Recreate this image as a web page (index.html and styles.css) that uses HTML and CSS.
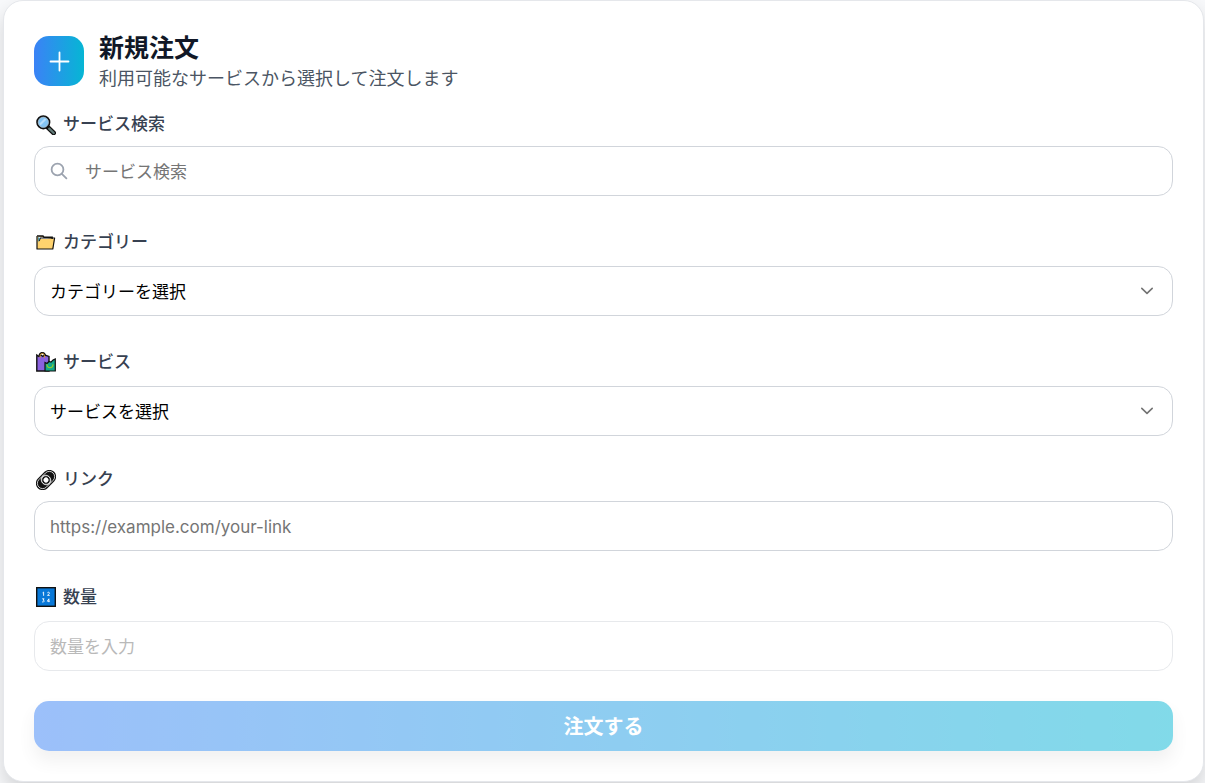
FILE: index.html
```
<!DOCTYPE html>
<html lang="ja">
<head>
  <meta charset="UTF-8">
  <meta name="viewport" content="width=device-width, initial-scale=1.0">
  <title>新規注文</title>
  <link rel="stylesheet" href="styles.css">
</head>
<body>
  <main class="order-card">
    <header class="order-header">
      <div class="header-icon">
        <svg width="26" height="26" viewBox="0 0 26 26" fill="none" stroke="#fff" stroke-width="1.8" stroke-linecap="round" aria-hidden="true">
          <path d="M13.5 4.5v18M4.5 13.5h18"/>
        </svg>
      </div>
      <div>
        <h1>新規注文</h1>
        <p>利用可能なサービスから選択して注文します</p>
      </div>
    </header>

    <form class="order-form">
      <!-- Search -->
      <div class="field">
        <label class="compact" for="search">
          <svg class="label-icon" viewBox="0 0 20 20" aria-hidden="true">
            <path d="M11.5 12l6.2 6" stroke="#111" stroke-width="4.6" stroke-linecap="round"/>
            <path d="M13.2 13.7l4.5 4.3" stroke="#617b78" stroke-width="2.3" stroke-linecap="round"/>
            <circle cx="7.3" cy="7.3" r="6.2" fill="#83c5f5" stroke="#111" stroke-width="1.8"/>
            <circle cx="7.3" cy="7.3" r="5.1" fill="none" stroke="#a9bcc8" stroke-width=".8"/>
            <path d="M3.5 8.5l5-5 2 1-6 6z" fill="#b9dffb"/>
          </svg>
          サービス検索
        </label>
        <div class="control">
          <svg class="search-icon" width="20" height="20" viewBox="0 0 20 20" fill="none" stroke="#9ca3af" stroke-width="1.8" stroke-linecap="round" aria-hidden="true">
            <circle cx="8.5" cy="8.5" r="5.9"/>
            <path d="M12.8 12.8l4.6 4.6"/>
          </svg>
          <input class="with-icon" type="text" id="search" placeholder="サービス検索">
        </div>
      </div>

      <!-- Category -->
      <div class="field">
        <label for="category">
          <svg class="label-icon" viewBox="0 0 20 20" aria-hidden="true">
            <path d="M1 4h6l1 1.2h8.2V7" fill="#d99a2b" stroke="#111" stroke-width="1.4"/>
            <path d="M1 4l2.7 3H18.6l-1.4 10H1z" fill="#ffd36e"/>
            <path d="M1 4v13h15.8L18.6 6H4.4L3 9" fill="none" stroke="#111" stroke-width="1.2" stroke-linejoin="round"/>
            <path d="M2 5l2 1.2-1.8 4z" fill="#4b8fa0"/>
          </svg>
          カテゴリー
        </label>
        <div class="control">
          <select id="category">
            <option>カテゴリーを選択</option>
          </select>
          <svg class="chevron" width="14" height="8" viewBox="0 0 14 8" fill="none" stroke="#737373" stroke-width="1.6" stroke-linecap="round" stroke-linejoin="round" aria-hidden="true">
            <path d="M1.8 1.3L7 6.3l5.2-5"/>
          </svg>
        </div>
      </div>

      <!-- Service -->
      <div class="field">
        <label for="service">
          <svg class="label-icon" viewBox="0 0 20 20" aria-hidden="true">
            <path d="M3.5 5V3Q4 .8 6.3.8T9 3v2" fill="none" stroke="#111" stroke-width="1.8"/>
            <path d="M.8 3l2 1.4 2-1.4 2 1.4 2-1.4 4.2 1.4V19H.8z" fill="#8b62df" stroke="#111" stroke-width="1.4"/>
            <path d="M4.2 6V3.2Q4.6 1.4 6.3 1.4T8.4 3.2V6" fill="none" stroke="#d99b2c" stroke-width=".9"/>
            <path d="M9 10.5l2 1 2-2 2 .6 2-2 2.3-1.1V19H9z" fill="#13a98b" stroke="#111" stroke-width="1.2"/>
            <path d="M11 12.2q0 3.4 3 3.4t3-3.4" fill="none" stroke="#8acd31" stroke-width="1.2"/>
          </svg>
          サービス
        </label>
        <div class="control">
          <select id="service">
            <option>サービスを選択</option>
          </select>
          <svg class="chevron" width="14" height="8" viewBox="0 0 14 8" fill="none" stroke="#737373" stroke-width="1.6" stroke-linecap="round" stroke-linejoin="round" aria-hidden="true">
            <path d="M1.8 1.3L7 6.3l5.2-5"/>
          </svg>
        </div>
      </div>

      <!-- Link -->
      <div class="field">
        <label class="compact" for="link">
          <svg class="label-icon" viewBox="0 0 20 20" aria-hidden="true">
            <g transform="rotate(-45 10 10)">
              <rect x="-1.5" y="3.2" width="23" height="13.6" rx="6.8" fill="#111"/>
              <rect x="0" y="4.7" width="14.6" height="10.6" rx="5.3" fill="none" stroke="#eee" stroke-width=".8"/>
              <rect x="5.4" y="4.7" width="14.6" height="10.6" rx="5.3" fill="none" stroke="#eee" stroke-width=".8"/>
              <circle cx="10" cy="10" r="4.4" fill="#111" stroke="#eee" stroke-width=".8"/>
              <circle cx="10" cy="10" r="2.6" fill="#fff"/>
            </g>
          </svg>
          リンク
        </label>
        <input type="text" id="link" placeholder="https://example.com/your-link">
      </div>

      <!-- Quantity -->
      <div class="field">
        <label for="quantity">
          <svg class="label-icon" viewBox="0 0 20 20" aria-hidden="true">
            <rect x=".7" y=".7" width="18.6" height="18.6" fill="#0878d8" stroke="#111" stroke-width="1.4"/>
            <g fill="none" stroke="#fff" stroke-width=".9">
              <path d="M6.6 5.8l1-.7v3.7M11.4 5.8q1-1 1.8-.3t-.4 1.5l-1.3 1.4h2.2"/>
              <path d="M6.2 11.8h1.9l-1 1.3q1.3.1 1 1.2t-2 .6M12.9 15.2v-3.4l-1.6 2.4h2.4"/>
            </g>
          </svg>
          数量
        </label>
        <input type="text" id="quantity" placeholder="数量を入力" disabled>
      </div>

      <button type="submit" class="submit-btn" disabled>注文する</button>
    </form>
  </main>
</body>
</html>
```
FILE: styles.css
```
/* General Styles */
* {
  box-sizing: border-box;
}
body {
  margin: 0;
  padding: 0 1px 1px 3px;
  background: #f8f9fb;
  color: #111827;
  font-family: Inter, "Noto Sans CJK JP", sans-serif;
  font-size: 17px;
}
.order-card {
  background: #fff;
  border: 1px solid #e5e7eb;
  border-radius: 20px;
  padding: 30px;
  box-shadow: 0 10px 20px rgba(0, 0, 0, 0.15);
}
/* Header Styles */
.order-header {
  display: flex;
  align-items: center;
  gap: 15px;
  margin-bottom: 20px;
}
.header-icon {
  display: flex;
  align-items: center;
  justify-content: center;
  width: 50px;
  height: 50px;
  border-radius: 15px;
  background: linear-gradient(to right, #3b82f6, #06b6d4);
}
.order-header h1 {
  margin: 0;
  font-size: 25px;
  line-height: 35px;
  font-weight: 700;
}
.order-header p {
  margin: 0;
  font-size: 18px;
  line-height: 25px;
  color: #4b5563;
}
/* Form Styles */
.order-form {
  display: flex;
  flex-direction: column;
  gap: 30px;
}
.field label {
  display: flex;
  align-items: center;
  gap: 7px;
  margin-bottom: 8px;
  padding-left: 2px;
  line-height: 32px;
  font-weight: 500;
  color: #374151;
}
.field label.compact {
  line-height: 27px;
}
.label-icon {
  width: 20px;
  height: 20px;
}
.control {
  position: relative;
}
.field input,
.field select {
  display: block;
  width: 100%;
  height: 50px;
  padding: 2px 15px 0;
  border: 1px solid #d1d5db;
  border-radius: 15px;
  background: #fff;
  color: #000;
  font-family: inherit;
  font-size: 17px;
}
.field select {
  appearance: none;
}
.field input.with-icon {
  padding-left: 50px;
}
.field input::placeholder {
  color: #757575;
}
.field input:focus,
.field select:focus {
  outline: 2px solid #3b82f6;
}
.field input:disabled {
  opacity: 0.5;
}
.search-icon {
  position: absolute;
  top: 15px;
  left: 15px;
}
.chevron {
  position: absolute;
  top: 21px;
  right: 19px;
  pointer-events: none;
}
/* Button Styles */
.submit-btn {
  height: 50px;
  padding: 0 15px 2px;
  border: none;
  border-radius: 15px;
  background: linear-gradient(to right, #3b82f6, #06b6d4);
  color: #fff;
  font-family: inherit;
  font-size: 20px;
  font-weight: 700;
  box-shadow: 0 10px 15px rgba(0, 0, 0, 0.1);
  cursor: pointer;
}
.submit-btn:disabled {
  opacity: 0.5;
  cursor: not-allowed;
}
```
